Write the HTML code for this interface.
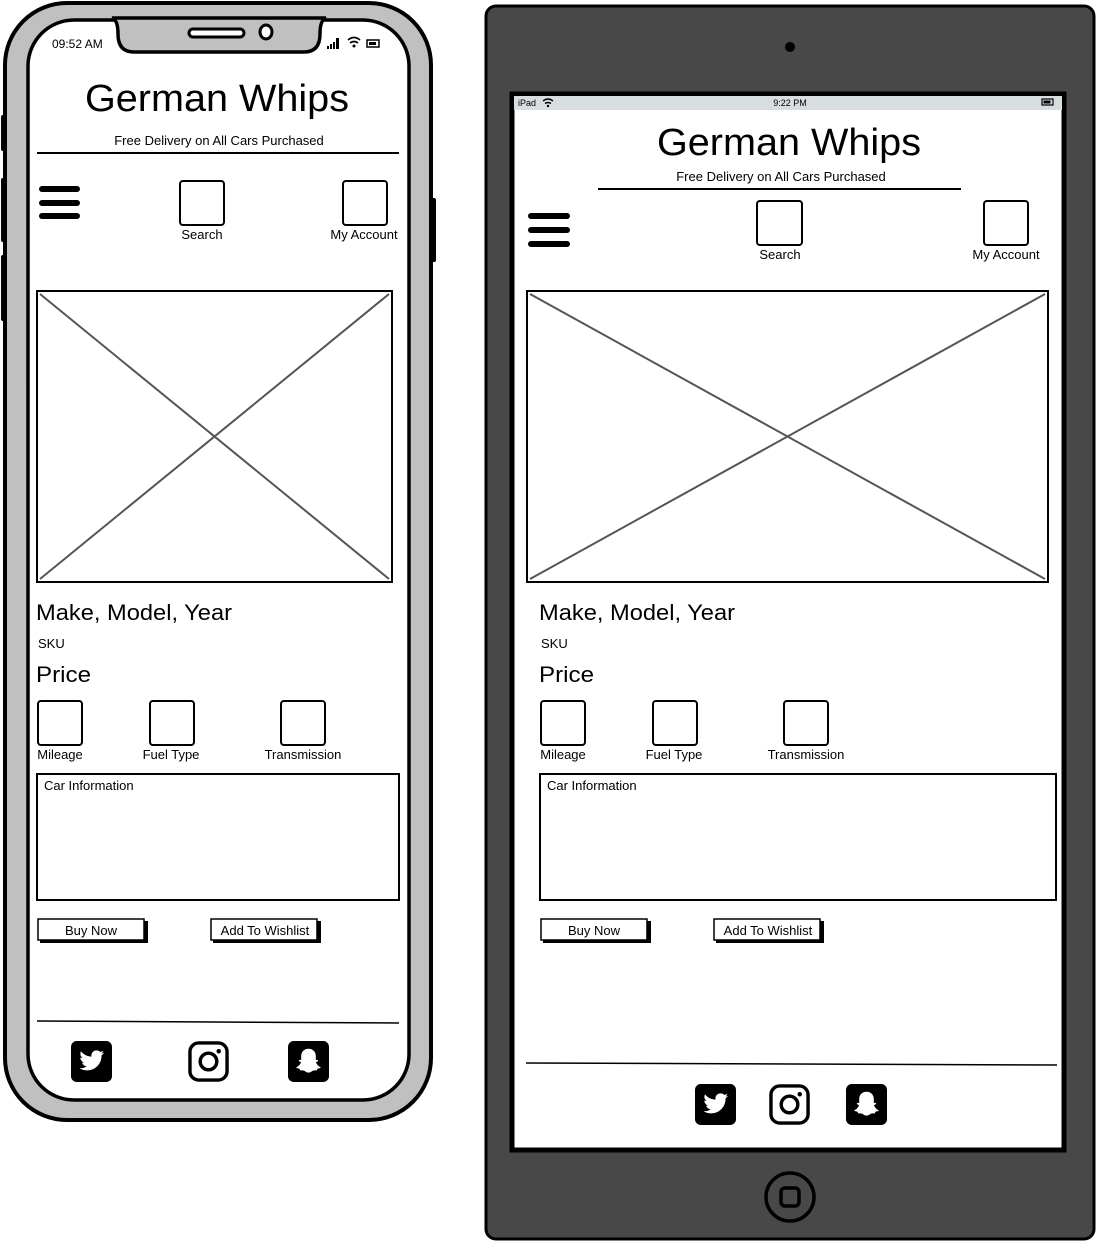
<!DOCTYPE html>
<html><head><meta charset="utf-8">
<style>
html,body{margin:0;padding:0;background:#fff;width:1098px;height:1243px;overflow:hidden}
svg{display:block}
text{font-family:"Liberation Sans",sans-serif;fill:#000}
</style></head>
<body>
<svg width="1098" height="1243" viewBox="0 0 1098 1243" xmlns="http://www.w3.org/2000/svg">
<defs>
<symbol id="tw" viewBox="0 0 42 42">
<rect x="0" y="0" width="42" height="42" rx="6" fill="#000"/>
<path d="M34 12c-1 .5-2 .7-3 .8 1-.6 1.9-1.6 2.2-2.8-1 .6-2.1 1-3.3 1.2-1-1-2.3-1.6-3.8-1.6-2.9 0-5.2 2.3-5.2 5.2 0 .4 0 .8.1 1.2-4.3-.2-8.2-2.3-10.7-5.4-.5.8-.7 1.7-.7 2.6 0 1.8.9 3.4 2.3 4.3-.9 0-1.7-.3-2.4-.6 0 2.5 1.8 4.6 4.2 5.1-.4.1-.9.2-1.4.2-.3 0-.7 0-1-.1.7 2.1 2.6 3.6 4.9 3.6-1.8 1.4-4 2.2-6.5 2.2-.4 0-.8 0-1.2-.1 2.3 1.5 5.1 2.3 8 2.3 9.6 0 14.8-7.9 14.8-14.8v-.7c1-.7 1.9-1.6 2.6-2.6z" fill="#fff"/>
</symbol>
<symbol id="ig" viewBox="0 0 42 42">
<rect x="2" y="2" width="38" height="38" rx="9" fill="#fff" stroke="#000" stroke-width="3.5"/>
<circle cx="21" cy="21" r="8.5" fill="none" stroke="#000" stroke-width="3.5"/>
<circle cx="31.5" cy="10.5" r="2.3" fill="#000"/>
</symbol>
<symbol id="sc" viewBox="0 0 42 42">
<rect x="0" y="0" width="42" height="42" rx="6" fill="#000"/>
<path d="M21 8c-4.5 0-7.5 3.2-7.5 7.5v4c-1.2-.4-2.4-.2-2.4.6 0 .8 1.6 1.2 2.3 1.5-1 2.8-3.2 4.6-5 5.3.3 1 2.2 1.3 3.5 1.5.3.6.2 1.6.8 1.7 1 .1 2.2-.3 3.6.3 1.4.6 2.5 2 4.7 2s3.3-1.4 4.7-2c1.4-.6 2.6-.2 3.6-.3.6-.1.5-1.1.8-1.7 1.3-.2 3.2-.5 3.5-1.5-1.8-.7-4-2.5-5-5.3.7-.3 2.3-.7 2.3-1.5 0-.8-1.2-1-2.4-.6v-4c0-4.3-3-7.5-7.5-7.5z" fill="#fff"/>
</symbol>
</defs>

<!-- ============ PHONE ============ -->
<rect x="1" y="115" width="6" height="36" rx="2" fill="#000"/>
<rect x="1" y="178" width="6" height="64" rx="2" fill="#000"/>
<rect x="1" y="255" width="6" height="66" rx="2" fill="#000"/>
<rect x="429" y="198" width="7" height="64" rx="2" fill="#000"/>
<rect x="5" y="3" width="426" height="1117" rx="62" fill="#c0c0c0" stroke="#000" stroke-width="4"/>
<rect x="28" y="20" width="381" height="1080" rx="46" fill="#fff" stroke="#000" stroke-width="3.5"/>
<path d="M112 18 Q118 20 118 34 Q118 52 134 52 L304 52 Q320 52 320 34 Q320 20 326 18 Z" fill="#c0c0c0" stroke="#000" stroke-width="3.5"/>
<rect x="189" y="29" width="55" height="8" rx="4" fill="#fff" stroke="#000" stroke-width="3"/>
<ellipse cx="266" cy="32" rx="6" ry="7" fill="#fff" stroke="#000" stroke-width="3"/>
<text x="52" y="48" font-size="12">09:52 AM</text>
<g fill="#000"><rect x="327" y="46" width="2" height="3"/><rect x="330" y="44" width="2" height="5"/><rect x="333" y="42" width="2" height="7"/><rect x="336" y="38" width="3" height="11"/></g>
<path d="M348 40 q6-5 12 0 M350 43 q4-3 8 0" fill="none" stroke="#000" stroke-width="1.6"/><circle cx="354" cy="46" r="1.5"/>
<rect x="367" y="40" width="12" height="7" fill="none" stroke="#000" stroke-width="1.5"/><rect x="369" y="42" width="7" height="3"/>

<text x="85" y="111" font-size="38" textLength="264" lengthAdjust="spacingAndGlyphs">German Whips</text>
<text x="219" y="145" font-size="13" text-anchor="middle">Free Delivery on All Cars Purchased</text>
<line x1="37" y1="153" x2="399" y2="153" stroke="#000" stroke-width="2"/>
<g fill="#000"><rect x="39" y="186" width="41" height="6" rx="3"/><rect x="39" y="200" width="41" height="6" rx="3"/><rect x="39" y="213" width="41" height="6" rx="3"/></g>
<rect x="180" y="181" width="44" height="44" rx="3" fill="none" stroke="#000" stroke-width="2"/>
<text x="202" y="239" font-size="13" text-anchor="middle">Search</text>
<rect x="343" y="181" width="44" height="44" rx="3" fill="none" stroke="#000" stroke-width="2"/>
<text x="364" y="239" font-size="13" text-anchor="middle">My Account</text>

<rect x="37" y="291" width="355" height="291" fill="#fff" stroke="#000" stroke-width="2"/>
<path d="M40 294 L389 579 M389 294 L40 579" stroke="#555" stroke-width="2"/>

<text x="36" y="620" font-size="22" textLength="196" lengthAdjust="spacingAndGlyphs">Make, Model, Year</text>
<text x="38" y="648" font-size="13">SKU</text>
<text x="36" y="682" font-size="22" textLength="55" lengthAdjust="spacingAndGlyphs">Price</text>
<rect x="38" y="701" width="44" height="44" rx="3" fill="none" stroke="#000" stroke-width="2"/>
<rect x="150" y="701" width="44" height="44" rx="3" fill="none" stroke="#000" stroke-width="2"/>
<rect x="281" y="701" width="44" height="44" rx="3" fill="none" stroke="#000" stroke-width="2"/>
<text x="60" y="759" font-size="13" text-anchor="middle">Mileage</text>
<text x="171" y="759" font-size="13" text-anchor="middle">Fuel Type</text>
<text x="303" y="759" font-size="13" text-anchor="middle">Transmission</text>
<rect x="37" y="774" width="362" height="126" fill="none" stroke="#000" stroke-width="2"/>
<text x="44" y="790" font-size="13">Car Information</text>
<rect x="40" y="921" width="108" height="22" fill="#000"/>
<rect x="38" y="919" width="106" height="21" fill="#fff" stroke="#000" stroke-width="1.5"/>
<text x="91" y="935" font-size="13" text-anchor="middle">Buy Now</text>
<rect x="213" y="921" width="108" height="22" fill="#000"/>
<rect x="211" y="919" width="106" height="21" fill="#fff" stroke="#000" stroke-width="1.5"/>
<text x="265" y="935" font-size="13" text-anchor="middle">Add To Wishlist</text>
<line x1="37" y1="1021" x2="399" y2="1023" stroke="#000" stroke-width="1.5"/>
<use href="#tw" x="71" y="1041" width="41" height="41"/>
<use href="#ig" x="188" y="1041" width="41" height="41"/>
<use href="#sc" x="288" y="1041" width="41" height="41"/>

<!-- ============ IPAD ============ -->
<rect x="486" y="6" width="608" height="1233" rx="10" fill="#484848" stroke="#000" stroke-width="3"/>
<circle cx="790" cy="47" r="5" fill="#000"/>
<rect x="512" y="94" width="552" height="1056" fill="#fff" stroke="#000" stroke-width="5"/>
<rect x="514" y="96" width="548" height="14" fill="#d8dde0"/>
<text x="518" y="106" font-size="9">iPad</text>
<path d="M543 101 q5-4 10 0 M545 103.5 q3-2 6 0" fill="none" stroke="#000" stroke-width="1.4"/><circle cx="548" cy="106" r="1.2"/>
<text x="790" y="106" font-size="9" text-anchor="middle">9:22 PM</text>
<rect x="1042" y="99" width="11" height="6" fill="none" stroke="#000" stroke-width="1.2"/><rect x="1043.5" y="100.5" width="7" height="3"/>

<text x="657" y="155" font-size="38" textLength="264" lengthAdjust="spacingAndGlyphs">German Whips</text>
<text x="781" y="181" font-size="13" text-anchor="middle">Free Delivery on All Cars Purchased</text>
<line x1="598" y1="189" x2="961" y2="189" stroke="#000" stroke-width="2"/>
<g fill="#000"><rect x="528" y="213" width="42" height="6" rx="3"/><rect x="528" y="227" width="42" height="6" rx="3"/><rect x="528" y="241" width="42" height="6" rx="3"/></g>
<rect x="757" y="201" width="45" height="44" rx="3" fill="none" stroke="#000" stroke-width="2"/>
<text x="780" y="259" font-size="13" text-anchor="middle">Search</text>
<rect x="984" y="201" width="44" height="44" rx="3" fill="none" stroke="#000" stroke-width="2"/>
<text x="1006" y="259" font-size="13" text-anchor="middle">My Account</text>

<rect x="527" y="291" width="521" height="291" fill="#fff" stroke="#000" stroke-width="2"/>
<path d="M530 294 L1045 579 M1045 294 L530 579" stroke="#555" stroke-width="2"/>

<text x="539" y="620" font-size="22" textLength="196" lengthAdjust="spacingAndGlyphs">Make, Model, Year</text>
<text x="541" y="648" font-size="13">SKU</text>
<text x="539" y="682" font-size="22" textLength="55" lengthAdjust="spacingAndGlyphs">Price</text>
<rect x="541" y="701" width="44" height="44" rx="3" fill="none" stroke="#000" stroke-width="2"/>
<rect x="653" y="701" width="44" height="44" rx="3" fill="none" stroke="#000" stroke-width="2"/>
<rect x="784" y="701" width="44" height="44" rx="3" fill="none" stroke="#000" stroke-width="2"/>
<text x="563" y="759" font-size="13" text-anchor="middle">Mileage</text>
<text x="674" y="759" font-size="13" text-anchor="middle">Fuel Type</text>
<text x="806" y="759" font-size="13" text-anchor="middle">Transmission</text>
<rect x="540" y="774" width="516" height="126" fill="none" stroke="#000" stroke-width="2"/>
<text x="547" y="790" font-size="13">Car Information</text>
<rect x="543" y="921" width="108" height="22" fill="#000"/>
<rect x="541" y="919" width="106" height="21" fill="#fff" stroke="#000" stroke-width="1.5"/>
<text x="594" y="935" font-size="13" text-anchor="middle">Buy Now</text>
<rect x="716" y="921" width="108" height="22" fill="#000"/>
<rect x="714" y="919" width="106" height="21" fill="#fff" stroke="#000" stroke-width="1.5"/>
<text x="768" y="935" font-size="13" text-anchor="middle">Add To Wishlist</text>
<line x1="526" y1="1063" x2="1057" y2="1065" stroke="#000" stroke-width="1.5"/>
<use href="#tw" x="695" y="1084" width="41" height="41"/>
<use href="#ig" x="769" y="1084" width="41" height="41"/>
<use href="#sc" x="846" y="1084" width="41" height="41"/>

<circle cx="790" cy="1197" r="24" fill="none" stroke="#000" stroke-width="3.5"/>
<rect x="781" y="1188" width="18" height="18" rx="4" fill="none" stroke="#000" stroke-width="3.5"/>
</svg>
</body></html>
